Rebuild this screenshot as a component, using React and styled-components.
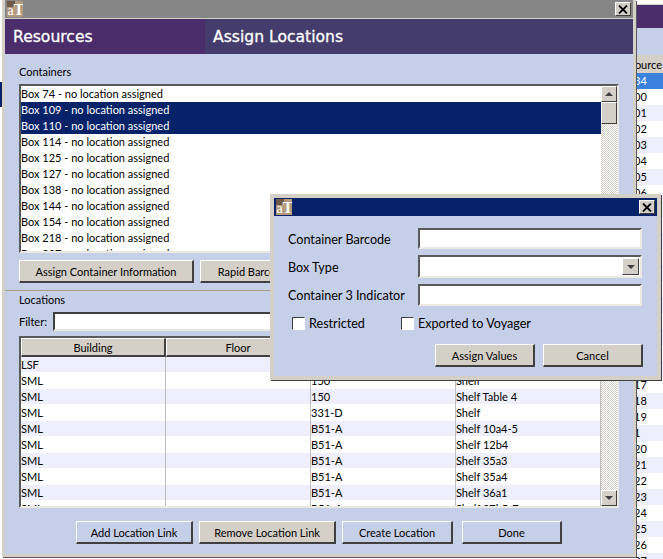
import React from 'react';
import styled, { createGlobalStyle } from 'styled-components';

const boxes = [74, 109, 110, 114, 125, 127, 138, 144, 154, 218, 227];
const selectedBoxes = [109, 110];

const locations = [
  ['LSF', '', '', ''],
  ['SML', '', '150', 'Shelf'],
  ['SML', '', '150', 'Shelf Table 4'],
  ['SML', '', '331-D', 'Shelf'],
  ['SML', '', 'B51-A', 'Shelf 10a4-5'],
  ['SML', '', 'B51-A', 'Shelf 12b4'],
  ['SML', '', 'B51-A', 'Shelf 35a3'],
  ['SML', '', 'B51-A', 'Shelf 35a4'],
  ['SML', '', 'B51-A', 'Shelf 36a1'],
  ['SML', '', 'B51-A', 'Shelf 37b5-7'],
];

const sideRows = ['34', '00', '01', '02', '03', '04', '05', '06', '07', '08', '09', '10', '11', '12', '13', '14', '15', '16', '16', '17', '18', '19', '1', '20', '21', '22', '23', '24', '25', '26', '27'];

const blue = '#c6cfe8';
const grey = '#d4d0c8';
const navy = '#06236a';

const GlobalStyle = createGlobalStyle`
  html, body {
    margin: 0;
    padding: 0;
    background: #fff;
  }
  * {
    box-sizing: border-box;
  }
`;

const Page = styled.div`
  position: relative;
  display: flex;
  width: 663px;
  height: 559px;
  overflow: hidden;
  font-family: Lato, "DejaVu Sans", sans-serif;
  font-size: 11px;
  color: #000;
`;

const LeftStub = styled.div`
  flex: 0 0 2px;
  background: linear-gradient(#fff 82px, ${navy} 82px, ${navy} 107px, #fff 107px);
`;

const Win = styled.div`
  flex: 0 0 634px;
  height: 557px;
  margin-right: 1px;
  display: flex;
  flex-direction: column;
  border: 3px solid ${grey};
  border-top: 0;
  box-shadow: 1px 1px 0 #5a5a5a;
  background: ${blue};
`;

const TitleBar = styled.div`
  flex: 0 0 ${p => p.$h}px;
  display: flex;
  align-items: center;
  justify-content: space-between;
  padding: 0 2px;
  background: ${p => p.$bg};
  border-bottom: ${p => (p.$line ? `1px solid ${grey}` : '0')};
`;

const CloseBtn = styled.div`
  width: 16px;
  height: 14px;
  display: flex;
  align-items: center;
  justify-content: center;
  background: ${grey};
  border: 1px solid;
  border-color: #fff #404040 #404040 #fff;
`;

const Banner = styled.div`
  flex: 0 0 35px;
  display: flex;
  align-items: center;
  font-family: "DejaVu Sans", sans-serif;
  font-size: 15.6px;
  -webkit-text-stroke: 0.3px #fff;
  color: #fff;
  background: #443c6c;
`;

const BannerPart = styled.div`
  height: 100%;
  display: flex;
  align-items: center;
  padding-left: 8px;
  width: ${p => (p.$wide ? 'auto' : '200px')};
  background: ${p => (p.$wide ? 'transparent' : '#4c2d6b')};
`;

const Body = styled.div`
  flex: 1;
  display: flex;
  flex-direction: column;
  padding-top: 11px;
`;

const Section = styled.div`
  padding-left: 14px;
`;

const Label = styled.div`
  height: 16px;
  line-height: 14px;
  margin-top: ${p => p.$top || 0}px;
`;

const Frame = styled.div`
  width: 600px;
  height: ${p => p.$h}px;
  margin-top: ${p => p.$top}px;
  display: flex;
  overflow: hidden;
  background: #fff;
  border: 2px solid;
  border-color: #5a5a5a #ece9e2 #ece9e2 #5a5a5a;
`;

const ListArea = styled.div`
  flex: 1;
  min-width: 0;
  overflow: hidden;
`;

const ListRow = styled.div`
  height: 16px;
  line-height: 15px;
  white-space: nowrap;
  background: ${p => (p.$selected ? navy : '#fff')};
  color: ${p => (p.$selected ? '#fff' : '#000')};
`;

const Scrollbar = styled.div`
  flex: 0 0 16px;
  display: flex;
  flex-direction: column;
  background-color: #fff;
  background-image: conic-gradient(${grey} 25%, #fff 0 50%, ${grey} 0 75%, #fff 0);
  background-size: 2px 2px;
`;

const ScrollBtn = styled.div`
  flex: 0 0 ${p => p.$h}px;
  display: flex;
  align-items: center;
  justify-content: center;
  margin-top: ${p => (p.$end ? 'auto' : '0')};
  background: ${grey};
  border: 1px solid;
  border-color: #fff #404040 #404040 #fff;
`;

const Arrow = styled.div`
  width: 0;
  height: 0;
  border-left: 4px solid transparent;
  border-right: 4px solid transparent;
  border-${p => (p.$up ? 'bottom' : 'top')}: 4px solid #404040;
`;

const ButtonRow = styled.div`
  display: flex;
  gap: ${p => p.$gap}px;
  margin-top: ${p => p.$top}px;
  padding-left: ${p => p.$left}px;
`;

const Btn = styled.div`
  width: ${p => p.$w}px;
  height: 23px;
  flex: 0 0 auto;
  display: flex;
  align-items: center;
  justify-content: center;
  white-space: nowrap;
  margin-left: ${p => p.$ml || 0}px;
  background: ${p => (p.$blue ? blue : grey)};
  border-style: solid;
  border-width: 1px 2px 2px 1px;
  border-color: #fff #404040 #404040 #fff;
`;

const Separator = styled.div`
  height: 1px;
  margin-top: 7px;
  background: #a89b84;
`;

const FilterRow = styled.div`
  display: flex;
  align-items: center;
  margin-top: 3px;
`;

const FilterLabel = styled.span`
  flex: 0 0 34px;
`;

const FilterInput = styled.div`
  width: 566px;
  height: 19px;
  background: #fff;
  border: 2px solid;
  border-color: #404040 #ece9e2 #ece9e2 #404040;
`;

const HeadRow = styled.div`
  display: flex;
  height: 19px;
`;

const HeadCell = styled.div`
  flex: 0 0 145px;
  display: flex;
  align-items: center;
  justify-content: center;
  background: ${grey};
  border-style: solid;
  border-width: 1px 2px 2px 1px;
  border-color: #fff #404040 #404040 #fff;
`;

const DataRow = styled.div`
  display: flex;
  height: 16px;
  background: linear-gradient(${p => (p.$odd ? '#eeeefc' : '#fff')} 15px, #fff 15px);
`;

const DataCell = styled.div`
  flex: 0 0 145px;
  line-height: 15px;
  white-space: nowrap;
  border-right: 1px solid #bdbdbd;
`;

const Side = styled.div`
  flex: 1;
  min-width: 0;
  display: flex;
  flex-direction: column;
  overflow: hidden;
`;

const SidePurple = styled.div`
  flex: 0 0 24px;
  margin-top: 4px;
  border-top: 1px solid ${grey};
  background: #4c2d6b;
`;

const SideBlue = styled.div`
  flex: 0 0 27px;
  background: ${blue};
`;

const SideHead = styled.div`
  flex: 0 0 18px;
  display: flex;
  align-items: center;
  justify-content: flex-end;
  padding-right: 1px;
  overflow: hidden;
  white-space: nowrap;
  background: ${grey};
`;

const SideRow = styled.div`
  flex: 0 0 16px;
  line-height: 15px;
  white-space: nowrap;
  text-indent: -3px;
  background: ${p => (p.$active ? '#3b82dc' : p.$odd ? '#eeeefc' : '#fff')};
  color: ${p => (p.$active ? '#fff' : '#000')};
`;

const Dialog = styled.div`
  position: absolute;
  left: 270px;
  top: 194px;
  width: 391px;
  height: 186px;
  display: flex;
  flex-direction: column;
  background: ${blue};
  border: 4px solid ${grey};
  box-shadow: 1px 1px 0 #404040;
`;

const DialogBody = styled.div`
  padding: 12px 14px 0;
`;

const FormGrid = styled.div`
  display: grid;
  grid-template-columns: 130px 224px;
  row-gap: 6px;
  align-items: center;
  font-size: 12.6px;
`;

const FieldLabel = styled.span`
  padding-top: ${p => p.$shift || 0}px;
`;

const Field = styled.div`
  height: ${p => p.$h}px;
  display: flex;
  justify-content: flex-end;
  align-items: center;
  padding-right: 1px;
  background: #fff;
  border: 2px solid;
  border-color: #5a5a5a #ece9e2 #ece9e2 #5a5a5a;
`;

const ComboBtn = styled.div`
  width: 17px;
  height: 17px;
  display: flex;
  align-items: center;
  justify-content: center;
  background: ${grey};
  border: 1px solid;
  border-color: #fff #404040 #404040 #fff;
`;

const CheckRow = styled.div`
  display: flex;
  align-items: center;
  height: 13px;
  margin-top: 11px;
  padding-left: 4px;
  font-size: 12.6px;
`;

const CheckItem = styled.div`
  flex: 0 0 ${p => p.$w}px;
  display: flex;
  align-items: center;
  gap: 4px;
`;

const CheckBox = styled.div`
  width: 13px;
  height: 13px;
  background: #fff;
  border: 1px solid;
  border-color: #404040 #fff #fff #404040;
`;

const Logo = () => (
  <svg width="16" height="16" viewBox="0 0 16 16">
    <rect width="16" height="16" fill="#b39a7c" />
    <rect x="0" y="0" width="8" height="6" fill="#6f5a48" />
    <text x="0.5" y="14" fontFamily="Liberation Serif, serif" fontSize="14" fill="#fff">a</text>
    <text x="6.5" y="14" fontFamily="Liberation Serif, serif" fontSize="16" fontWeight="700" fill="#fff">T</text>
  </svg>
);

const CloseIcon = () => (
  <svg width="10" height="9" viewBox="0 0 10 9">
    <path d="M1 0.5 L9 8.5 M9 0.5 L1 8.5" stroke="#000" strokeWidth="1.8" fill="none" />
  </svg>
);

const App = () => (
  <Page>
    <GlobalStyle />
    <LeftStub />
    <Win>
      <TitleBar $h={19} $bg="#868686" $line>
        <Logo />
        <CloseBtn><CloseIcon /></CloseBtn>
      </TitleBar>
      <Banner>
        <BannerPart>Resources</BannerPart>
        <BannerPart $wide>Assign Locations</BannerPart>
      </Banner>
      <Body>
        <Section>
          <Label>Containers</Label>
          <Frame $h={169} $top={3}>
            <ListArea>
              {boxes.map(b => (
                <ListRow key={b} $selected={selectedBoxes.includes(b)}>
                  Box {b} - no location assigned
                </ListRow>
              ))}
            </ListArea>
            <Scrollbar>
              <ScrollBtn $h={16}><Arrow $up /></ScrollBtn>
              <ScrollBtn $h={22} />
            </Scrollbar>
          </Frame>
          <ButtonRow $gap={6} $top={7} $left={0}>
            <Btn $w={175}>Assign Container Information</Btn>
            <Btn $w={135}>Rapid Barcode Entry</Btn>
          </ButtonRow>
        </Section>
        <Separator />
        <Section>
          <Label $top={2}>Locations</Label>
          <FilterRow>
            <FilterLabel>Filter:</FilterLabel>
            <FilterInput />
          </FilterRow>
          <Frame $h={172} $top={5}>
            <ListArea>
              <HeadRow>
                <HeadCell>Building</HeadCell>
                <HeadCell>Floor</HeadCell>
                <HeadCell>Room</HeadCell>
                <HeadCell>Location</HeadCell>
              </HeadRow>
              {locations.map((row, i) => (
                <DataRow key={i} $odd={i % 2 === 0}>
                  {row.map((c, j) => <DataCell key={j}>{c}</DataCell>)}
                </DataRow>
              ))}
            </ListArea>
            <Scrollbar>
              <ScrollBtn $h={16}><Arrow $up /></ScrollBtn>
              <ScrollBtn $h={16} $end><Arrow /></ScrollBtn>
            </Scrollbar>
          </Frame>
        </Section>
        <ButtonRow $gap={6} $top={13} $left={71}>
          <Btn $w={117} $blue>Add Location Link</Btn>
          <Btn $w={137}>Remove Location Link</Btn>
          <Btn $w={111} $blue>Create Location</Btn>
          <Btn $w={100} $blue $ml={3}>Done</Btn>
        </ButtonRow>
      </Body>
    </Win>
    <Side>
      <SidePurple />
      <SideBlue />
      <SideHead>Source</SideHead>
      {sideRows.map((r, i) => (
        <SideRow key={i} $active={i === 0} $odd={i % 2 === 0}>{r}</SideRow>
      ))}
    </Side>
    <Dialog>
      <TitleBar $h={18} $bg={navy}>
        <Logo />
        <CloseBtn><CloseIcon /></CloseBtn>
      </TitleBar>
      <DialogBody>
        <FormGrid>
          <FieldLabel $shift={2}>Container Barcode</FieldLabel>
          <Field $h={21} />
          <FieldLabel $shift={2}>Box Type</FieldLabel>
          <Field $h={23}>
            <ComboBtn><Arrow /></ComboBtn>
          </Field>
          <FieldLabel>Container 3 Indicator</FieldLabel>
          <Field $h={22} />
        </FormGrid>
        <CheckRow>
          <CheckItem $w={109}><CheckBox />Restricted</CheckItem>
          <CheckItem $w={200}><CheckBox />Exported to Voyager</CheckItem>
        </CheckRow>
        <ButtonRow $gap={8} $top={14} $left={147}>
          <Btn $w={100}>Assign Values</Btn>
          <Btn $w={100}>Cancel</Btn>
        </ButtonRow>
      </DialogBody>
    </Dialog>
  </Page>
);

export default App;
